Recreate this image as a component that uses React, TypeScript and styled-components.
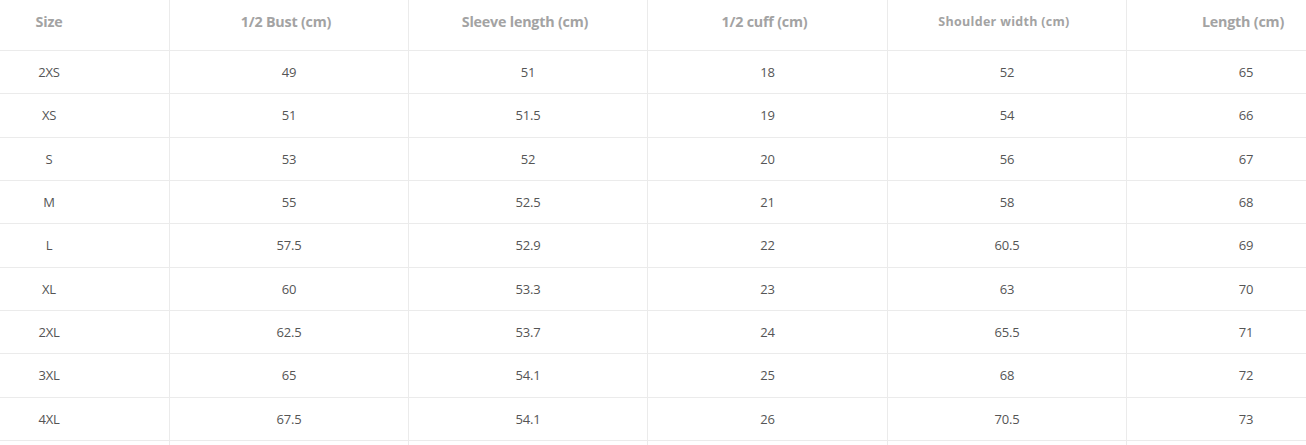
import React from "react";
import styled, { createGlobalStyle } from "styled-components";

const Global = createGlobalStyle`
  html, body { margin: 0; padding: 0; background: #fff; overflow: hidden; }
  body { width: 1306px; height: 445px; }
`;

const Table = styled.div`
  display: grid;
  grid-template-columns: 169px 239px 239px 240px 239px 239px;
  grid-template-rows: 51px repeat(9, 43.333px) 20px;
  width: 1365px;
  font-family: "Open Sans", "Liberation Sans", sans-serif;
`;

const Cell = styled.div<{ $first?: boolean; $head?: boolean; $tight?: boolean }>`
  display: flex;
  align-items: center;
  justify-content: center;
  box-sizing: border-box;
  border-bottom: 1px solid #ebebeb;
  border-left: ${(p) => (p.$first ? "none" : "1px solid #ebebeb")};
  padding-right: ${(p) => (p.$first ? "71px" : p.$head ? "6px" : "0")};
  padding-bottom: ${(p) => (p.$head ? "8px" : "0")};
  color: ${(p) => (p.$head ? "#a3a3a3" : "#555")};
  font-size: ${(p) => (p.$head ? (p.$tight ? "12.5px" : "14.3px") : "13px")};
  font-weight: ${(p) => (p.$head ? 700 : 400)};
  letter-spacing: ${(p) => (p.$head ? (p.$tight ? "0.3px" : "-0.2px") : "-0.2px")};
  white-space: nowrap;
`;

const headers = [
  "Size",
  "1/2 Bust (cm)",
  "Sleeve length (cm)",
  "1/2 cuff (cm)",
  "Shoulder width (cm)",
  "Length (cm)",
];

const rows: string[][] = [
  ["2XS", "49", "51", "18", "52", "65"],
  ["XS", "51", "51.5", "19", "54", "66"],
  ["S", "53", "52", "20", "56", "67"],
  ["M", "55", "52.5", "21", "58", "68"],
  ["L", "57.5", "52.9", "22", "60.5", "69"],
  ["XL", "60", "53.3", "23", "63", "70"],
  ["2XL", "62.5", "53.7", "24", "65.5", "71"],
  ["3XL", "65", "54.1", "25", "68", "72"],
  ["4XL", "67.5", "54.1", "26", "70.5", "73"],
  ["", "", "", "", "", ""],
];

export default function App() {
  return (
    <>
      <Global />
      <Table>
        {headers.map((h, i) => (
          <Cell key={h} $head $first={i === 0} $tight={i === 4}>
            {h}
          </Cell>
        ))}
        {rows.map((r, ri) =>
          r.map((v, ci) => (
            <Cell key={`${ri}-${ci}`} $first={ci === 0}>
              {v}
            </Cell>
          ))
        )}
      </Table>
    </>
  );
}
